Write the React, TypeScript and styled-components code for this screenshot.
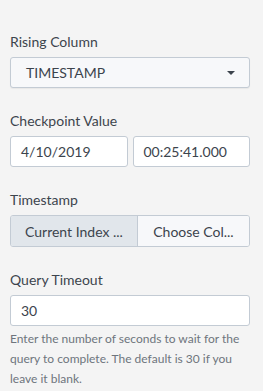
import styled, { createGlobalStyle } from 'styled-components'

const GlobalStyle = createGlobalStyle`
  html, body {
    margin: 0;
    padding: 0;
    background: #f4f4f4;
  }
  body {
    font-family: Lato, "Open Sans", "Liberation Sans", sans-serif;
    color: #3c444d;
  }
`

const Panel = styled.div`
  width: 240px;
  padding: 33px 13px 0 10px;
  display: flex;
  flex-direction: column;
`

const Field = styled.div`
  display: flex;
  flex-direction: column;
  margin-bottom: 24px;
  &:last-child {
    margin-bottom: 0;
  }
`

const Label = styled.div`
  font-size: 14px;
  line-height: 18px;
  color: #3c444d;
  margin-bottom: 6px;
`

const Select = styled.div`
  height: 31px;
  box-sizing: border-box;
  border: 1px solid #c3cbd4;
  border-radius: 3px;
  background: #f7f8fa;
  box-shadow: 0 1px 1px rgba(0, 0, 0, 0.05);
  display: flex;
  align-items: center;
  justify-content: space-between;
  padding: 0 14px 0 15px;
  font-size: 14px;
  color: #3c444d;
`

const Caret = styled.span`
  width: 0;
  height: 0;
  border-left: 4px solid transparent;
  border-right: 4px solid transparent;
  border-top: 4px solid #3c444d;
`

const Row = styled.div`
  display: flex;
  gap: 5px;
`

const Input = styled.div`
  flex: 1 1 0;
  min-height: 31px;
  box-sizing: border-box;
  border: 1px solid #c3cbd4;
  border-radius: 3px;
  background: #fff;
  display: flex;
  align-items: center;
  padding: 0 10px;
  font-size: 14px;
  color: #3c444d;
`

const ButtonGroup = styled.div`
  display: flex;
  height: 32px;
  box-sizing: border-box;
  border: 1px solid #c3cbd4;
  border-radius: 3px;
  overflow: hidden;
`

const GroupButton = styled.div<{ $active?: boolean; $basis: number }>`
  flex: ${(p) => p.$basis} 1 0;
  display: flex;
  align-items: center;
  justify-content: center;
  white-space: nowrap;
  font-size: 14px;
  color: #3c444d;
  background: ${(p) => (p.$active ? '#e1e6eb' : '#f7f8fa')};
  & + & {
    border-left: 1px solid #c3cbd4;
  }
`

const Help = styled.div`
  margin-top: 3px;
  font-size: 12px;
  line-height: 20px;
  color: #6e757d;
`

export default function App() {
  return (
    <>
      <GlobalStyle />
      <Panel>
        <Field>
          <Label>Rising Column</Label>
          <Select>
            TIMESTAMP
            <Caret />
          </Select>
        </Field>
        <Field>
          <Label>Checkpoint Value</Label>
          <Row>
            <Input>4/10/2019</Input>
            <Input>00:25:41.000</Input>
          </Row>
        </Field>
        <Field>
          <Label>Timestamp</Label>
          <ButtonGroup>
            <GroupButton $active $basis={127}>
              Current Index ...
            </GroupButton>
            <GroupButton $basis={112}>Choose Col...</GroupButton>
          </ButtonGroup>
        </Field>
        <Field>
          <Label>Query Timeout</Label>
          <Input>30</Input>
          <Help>
            Enter the number of seconds to wait for the query to complete. The default is 30 if you
            leave it blank.
          </Help>
        </Field>
      </Panel>
    </>
  )
}
